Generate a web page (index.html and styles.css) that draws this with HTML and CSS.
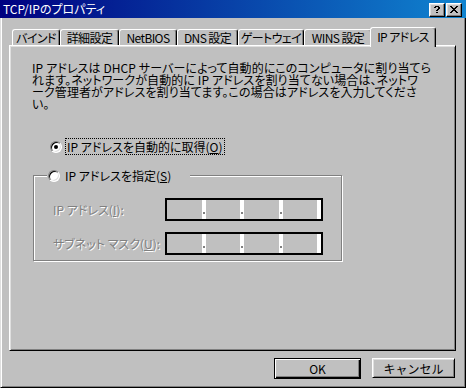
FILE: index.html
```html
<!DOCTYPE html>
<html lang="ja">
<head>
    <meta charset="UTF-8">
    <title>TCP/IPのプロパティ</title>
    <link rel="stylesheet" href="styles.css">
</head>
<body>

<div class="window">
    <!-- Title bar -->
    <div class="titlebar">
        <span class="title">TCP/IPのプロパティ</span>
        <div class="caption-buttons">
            <button class="cap-btn" title="ヘルプ">
                <svg width="6" height="7" viewBox="0 0 6 7" shape-rendering="crispEdges">
                    <path d="M1 0h4v1h-4z M0 1h2v1h-2z M4 1h2v2h-2z M3 3h2v1h-2z M2 4h2v1h-2z M2 6h2v1h-2z" fill="#000"/>
                </svg>
            </button>
            <button class="cap-btn" title="閉じる">
                <svg width="8" height="7" viewBox="0 0 8 7" shape-rendering="crispEdges">
                    <path d="M0 0h2v1h-2z M6 0h2v1h-2z M1 1h2v1h-2z M5 1h2v1h-2z M2 2h4v1h-4z M3 3h2v1h-2z M2 4h4v1h-4z M1 5h2v1h-2z M5 5h2v1h-2z M0 6h2v1h-2z M6 6h2v1h-2z" fill="#000"/>
                </svg>
            </button>
        </div>
    </div>

    <div class="content">
        <!-- Tabs -->
        <div class="tabs">
            <div class="tab tab-bind">バインド</div>
            <div class="tab tab-advanced">詳細設定</div>
            <div class="tab tab-netbios">NetBIOS</div>
            <div class="tab tab-dns">DNS 設定</div>
            <div class="tab tab-gateway">ゲートウェイ</div>
            <div class="tab tab-wins">WINS 設定</div>
            <div class="tab tab-ip active">IP アドレス</div>
        </div>

        <div class="panel">
            <p class="intro">IP アドレスは DHCP サーバーによって自動的にこのコンピュータに割り当てら<br>れます。ネットワークが自動的に IP アドレスを割り当てない場合は、ネットワ<br>ーク管理者がアドレスを割り当てます。この場合はアドレスを入力してくださ<br>い。</p>

            <div class="option auto">
                <span class="radio checked"></span>
                <span class="option-label focus">IP アドレスを自動的に取得(<u>O</u>)</span>
            </div>

            <fieldset class="group">
                <legend class="group-title">
                    <span class="option">
                        <span class="radio"></span>
                        <span class="option-label">IP アドレスを指定(<u>S</u>)</span>
                    </span>
                </legend>

                <div class="fields">
                    <label class="dim">IP アドレス(<u>I</u>):</label>
                    <div class="ipbox">
                        <span class="octet"><i class="dot"></i></span>
                        <span class="octet"><i class="dot"></i></span>
                        <span class="octet"><i class="dot"></i></span>
                        <span class="octet"><i class="dot"></i></span>
                    </div>

                    <label class="dim">サブネット マスク(<u>U</u>):</label>
                    <div class="ipbox">
                        <span class="octet"><i class="dot"></i></span>
                        <span class="octet"><i class="dot"></i></span>
                        <span class="octet"><i class="dot"></i></span>
                        <span class="octet"><i class="dot"></i></span>
                    </div>
                </div>
            </fieldset>
        </div>

        <!-- Dialog buttons -->
        <div class="buttons">
            <button class="btn default">OK</button>
            <button class="btn cancel">キャンセル</button>
        </div>
    </div>
</div>

</body>
</html>
```

FILE: styles.css
```css
body {
    margin: 0;
    background-color: #c0c0c0;
    font-family: "Noto Sans CJK JP", "Noto Sans", sans-serif;
    font-size: 12px;
    font-feature-settings: "palt";
    color: #000;
}

/* Window frame */
.window {
    width: 466px;
    height: 388px;
    display: flex;
    flex-direction: column;
}

.titlebar {
    height: 18px;
    flex: none;
    display: flex;
    align-items: center;
    padding: 0 4px 0 3px;
    background: linear-gradient(to right, #000080, #1084d0);
    color: #fff;
}

.title {
    flex: 1;
    line-height: 18px;
    white-space: nowrap;
}

.caption-buttons {
    display: flex;
    gap: 1px;
    margin-top: 1px;
}

.cap-btn {
    width: 16px;
    height: 14px;
    padding: 0;
    box-sizing: border-box;
    display: flex;
    align-items: center;
    justify-content: center;
    background-color: #c0c0c0;
    border: 1px solid;
    border-color: #fff #000 #000 #fff;
    box-shadow: inset -1px -1px #808080, inset 1px 1px #dfdfdf;
}

.content {
    flex: 1;
    border-left: 1px solid #dfdfdf;
    border-right: 1px solid #000;
    border-bottom: 1px solid #000;
    box-shadow: inset 1px 0 #fff, inset -1px -1px #808080;
}

/* Tabs */
.tabs {
    display: flex;
    align-items: flex-end;
    height: 18px;
    margin: 9px 0 0 11px;
}

.tab {
    height: 16px;
    box-sizing: border-box;
    display: flex;
    align-items: center;
    justify-content: center;
    border: 1px solid;
    border-bottom: none;
    border-color: #fff #000 transparent #fff;
    border-radius: 3px 3px 0 0;
    box-shadow: inset -1px 0 #808080;
    line-height: 14px;
    letter-spacing: -0.6px;
    white-space: nowrap;
}

.tab-bind { width: 48px; }
.tab-advanced { width: 59px; }
.tab-netbios { width: 58px; }
.tab-dns { width: 61px; }
.tab-gateway { width: 66px; }
.tab-wins { width: 68px; }
.tab-ip { width: 66px; }

.tab.active {
    height: 20px;
    margin: 0 -2px -2px;
    padding-bottom: 2px;
    position: relative;
    z-index: 1;
    background-color: #c0c0c0;
}

.panel {
    width: 447px;
    height: 306px;
    box-sizing: border-box;
    margin-left: 8px;
    padding: 16px 0 0 22px;
    border: 1px solid;
    border-color: #fff #000 #000 #fff;
    box-shadow: inset 1px 1px #dfdfdf, inset -1px -1px #808080;
}

.intro {
    margin: 0;
    letter-spacing: 0.1px;
    line-height: 12px;
    white-space: nowrap;
}

/* Radio options */
.option {
    display: flex;
    align-items: center;
    gap: 3px;
}

.option.auto {
    margin: 28px 0 0 18px;
}

.radio {
    width: 12px;
    height: 12px;
    flex: none;
    box-sizing: border-box;
    display: flex;
    align-items: center;
    justify-content: center;
    border-radius: 50%;
    background-color: #fff;
    border: 1px solid;
    border-color: #808080 #fff #fff #808080;
    box-shadow: inset 1px 1px #000, inset -1px -1px #dfdfdf;
}

.radio.checked::after {
    content: "";
    width: 4px;
    height: 4px;
    border-radius: 50%;
    background-color: #000;
}

.option-label {
    border: 1px dotted transparent;
    padding: 0 1px;
    line-height: 15px;
    white-space: nowrap;
}

.option-label.focus {
    border-color: #000;
}

/* Group box */
.group {
    width: 309px;
    min-width: 0;
    box-sizing: border-box;
    margin: 12px 0 0 1px;
    padding: 14px 0 5px 13px;
    border: 1px solid #808080;
    box-shadow: 1px 1px #fff, inset 1px 1px #fff;
}

.group-title {
    width: 143px;
    box-sizing: border-box;
    padding: 0 0 0 1px;
    background-color: #c0c0c0;
}

.fields {
    display: grid;
    grid-template-columns: 112px 158px;
    row-gap: 11px;
    align-items: center;
    margin-left: 6px;
}

.dim {
    color: #808080;
    text-shadow: 1px 1px 0 #fff;
    white-space: nowrap;
}

.ipbox {
    height: 23px;
    box-sizing: border-box;
    display: flex;
    border: 2px solid #000;
    background-color: #c0c0c0;
}

.octet {
    flex: 1;
    display: flex;
    justify-content: flex-end;
}

.dot {
    width: 4px;
    display: flex;
    align-items: center;
    justify-content: center;
    background-color: #fff;
}

.dot::before {
    content: "";
    width: 2px;
    height: 2px;
    margin-top: 6px;
    background-color: #808080;
}

.octet:last-child .dot::before {
    display: none;
}

/* Dialog buttons */
.buttons {
    display: flex;
    justify-content: flex-end;
    align-items: flex-start;
    gap: 11px;
    margin-top: 7px;
    padding-right: 10px;
}

.btn {
    height: 20px;
    box-sizing: border-box;
    padding: 0;
    font-family: inherit;
    font-size: 12px;
    color: #000;
    background-color: #c0c0c0;
    border: 1px solid;
    border-color: #fff #000 #000 #fff;
    box-shadow: inset 1px 1px #dfdfdf, inset -1px -1px #808080;
}

.btn.default {
    width: 87px;
    height: 21px;
    border: 1px solid #000;
    box-shadow: inset 1px 1px #fff, inset -1px -1px #000, inset -2px -2px #808080;
}

.btn.cancel {
    width: 83px;
}
```
